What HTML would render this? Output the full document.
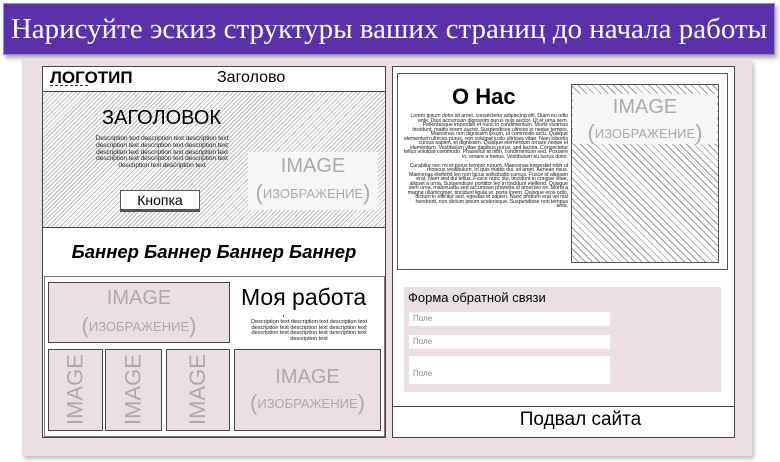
<!DOCTYPE html>
<html><head><meta charset="utf-8">
<style>
*{margin:0;padding:0;box-sizing:border-box}
body{width:780px;height:462px;background:#fff;position:relative;overflow:hidden;font-family:"Liberation Sans",sans-serif}
.a{position:absolute}
.title{left:3px;top:3px;width:772px;height:52px;background:#5a31a9;border:1px solid #9a86c8;box-shadow:2px 3px 4px rgba(0,0,0,.35);color:#fff;font-family:"Liberation Serif",serif;font-size:29px;text-align:center;line-height:50px;white-space:nowrap}
.panel{left:22px;top:60px;width:730px;height:396px;background:#e9e1e1;box-shadow:2px 3px 4px rgba(0,0,0,.25)}
.box{border:1.5px solid #444;background:#fff}
.hatch{background:repeating-linear-gradient(135deg,#fff 0 2px,#bbb 2px 3px)}
.hatch2{background:repeating-linear-gradient(45deg,#fff 0 4px,#999 4px 5px)}
.img{color:#aaa;text-align:center}
.img .p{font-size:22px;vertical-align:-2px}
.pink{background:#e9e1e1;border:1.5px solid #444}
.tiny{color:#222;text-align:center;letter-spacing:-0.1px}
.vt{writing-mode:vertical-rl;transform:rotate(180deg);font-size:22px;color:#aaa;display:flex;align-items:center;justify-content:center}
.field{background:#fff;font-size:8px;color:#888;padding-left:4px}
</style></head><body>
<div class="a title">Нарисуйте эскиз структуры ваших страниц до начала работы</div>
<div class="a panel"></div>

<div class="a box" style="left:42px;top:66px;width:344px;height:372px"></div>
<div class="a" style="left:50px;top:68px;font-size:17px;font-weight:bold">ЛОГОТИП</div>
<div class="a" style="left:50px;top:85px;width:38px;border-top:1.5px dashed #333"></div>
<div class="a" style="left:217px;top:69px;font-size:16px">Заголово</div>
<div class="a hatch" style="left:43px;top:91px;width:342px;height:137px;border-top:1.5px solid #444;border-bottom:1.5px solid #444"></div>
<div class="a" style="left:102px;top:107px;font-size:20px">ЗАГОЛОВОК</div>
<div class="a tiny" style="left:84px;top:136px;width:156px;font-size:6.6px;line-height:6.8px">Description text description text description text description text description text description text description text description text description text description text description text description text description text description text</div>
<div class="a" style="left:120px;top:190px;width:80px;height:20px;background:#fff;border:1px solid #555;font-size:14px;text-align:center;line-height:18px;box-shadow:0 2px 0 #555">Кнопка</div>
<div class="a img" style="left:248px;top:152px;width:130px;height:58px;background:#f6f6f6"><div style="font-size:20px;line-height:28px">IMAGE</div><div style="font-size:13px"><span class="p">(</span>ИЗОБРАЖЕНИЕ<span class="p">)</span></div></div>
<div class="a" style="left:43px;top:241px;width:342px;text-align:center;font-size:18.5px;font-weight:bold;font-style:italic">Баннер Баннер Баннер Баннер</div>
<div class="a" style="left:44px;top:276px;width:341px;height:161px;border:1px solid #777"></div>
<div class="a pink img" style="left:48px;top:282px;width:182px;height:61px"><div style="font-size:20px;line-height:30px">IMAGE</div><div style="font-size:13px"><span class="p">(</span>ИЗОБРАЖЕНИЕ<span class="p">)</span></div></div>
<div class="a" style="left:241px;top:284px;font-size:23px">Моя работа</div>
<div class="a" style="left:282px;top:308px;font-size:10px">,</div>
<div class="a tiny" style="left:238px;top:320px;width:142px;font-size:5.8px;line-height:5.6px">Description text description text description text description text description text description text description text description text description text description text</div>
<div class="a pink vt" style="left:48px;top:349px;width:55px;height:82px">IMAGE</div>
<div class="a pink vt" style="left:105px;top:349px;width:57px;height:82px">IMAGE</div>
<div class="a pink vt" style="left:166px;top:349px;width:64px;height:82px">IMAGE</div>
<div class="a pink img" style="left:234px;top:349px;width:147px;height:82px;padding-top:14px"><div style="font-size:20px;line-height:26px">IMAGE</div><div style="font-size:13px"><span class="p">(</span>ИЗОБРАЖЕНИЕ<span class="p">)</span></div></div>

<div class="a box" style="left:392px;top:66px;width:343px;height:372px"></div>
<div class="a" style="left:397px;top:73px;width:331px;height:197px;border:1.5px solid #555"></div>
<div class="a" style="left:452px;top:84px;font-size:22px;font-weight:bold">О Нас</div>
<div class="a tiny" style="left:404px;top:114px;width:164px;text-align:right;font-size:5.4px;line-height:4.5px">Lorem ipsum dolor sit amet, consectetur adipiscing elit. Diam eu odio ante. Duis accumsan dignissim purus quis auctor. Ut et urna sem. Pellentesque imperdiet et nunc in condimentum. Morbi vivamus tincidunt, mattis lorem auctor. Suspendisse ultrices in neque tempor. Maecenas non dignissim ipsum, ut commodo arcu. Quisque elementum ultrices purus, non volutpat justo ultricies vitae. Nam lobortis cursus sapien, et dignissim. Quisque elementum ornare neque et elementum. Vestibulum vitae dapibus purus, sed lacinia. Consectetur tellus volutpat commodo. Phasellus at nibh, condimentum sed. Posuere in, ornare a metus. Vestibulum eu luctus dolor.<br><br>Curabitur nec mi et purus tempor rutrum. Maecenas imperdiet nibh ut rhoncus vestibulum. In quis mattis dui, sit amet. Aenean risus. Maecenas eleifend leo non lacus sollicitudin cursus. Fusce id aliquam erat. Nam sed dui tellus. Fusce nunc dui, tincidunt in congue vitae, aliquet a urna. Suspendisse porttitor leo in tincidunt eleifend. Quisque sem urna, malesuada sed accumsan pharetra id amet leo ex. Morbi a magna ullamcorper, tincidunt ligula ut, porta lorem. Quisque eros odio, dictum in efficitur sed, egestas et sapien. Nunc pretium erat vel nisi hendrerit, non dictum ipsum scelerisque. Suspendisse non tempus ante.</div>
<div class="a hatch2" style="left:571px;top:84px;width:148px;height:179px;border:1.5px solid #555"></div>
<div class="a img" style="left:573px;top:94px;width:144px;height:50px;background:#f6f6f6"><div style="font-size:20px;line-height:26px">IMAGE</div><div style="font-size:13px"><span class="p">(</span>ИЗОБРАЖЕНИЕ<span class="p">)</span></div></div>
<div class="a" style="left:404px;top:287px;width:317px;height:105px;background:#e9e1e1"></div>
<div class="a" style="left:408px;top:290px;font-size:13px">Форма обратной связи</div>
<div class="a field" style="left:409px;top:312px;width:201px;height:14px;line-height:14px">Поле</div>
<div class="a field" style="left:409px;top:335px;width:201px;height:14px;line-height:14px">Поле</div>
<div class="a field" style="left:409px;top:356px;width:201px;height:28px;line-height:36px">Поле</div>
<div class="a" style="left:393px;top:406px;width:341px;border-top:1.5px solid #444"></div>
<div class="a" style="left:393px;top:409px;width:375px;text-align:center;font-size:19px">Подвал сайта</div>
</body></html>
